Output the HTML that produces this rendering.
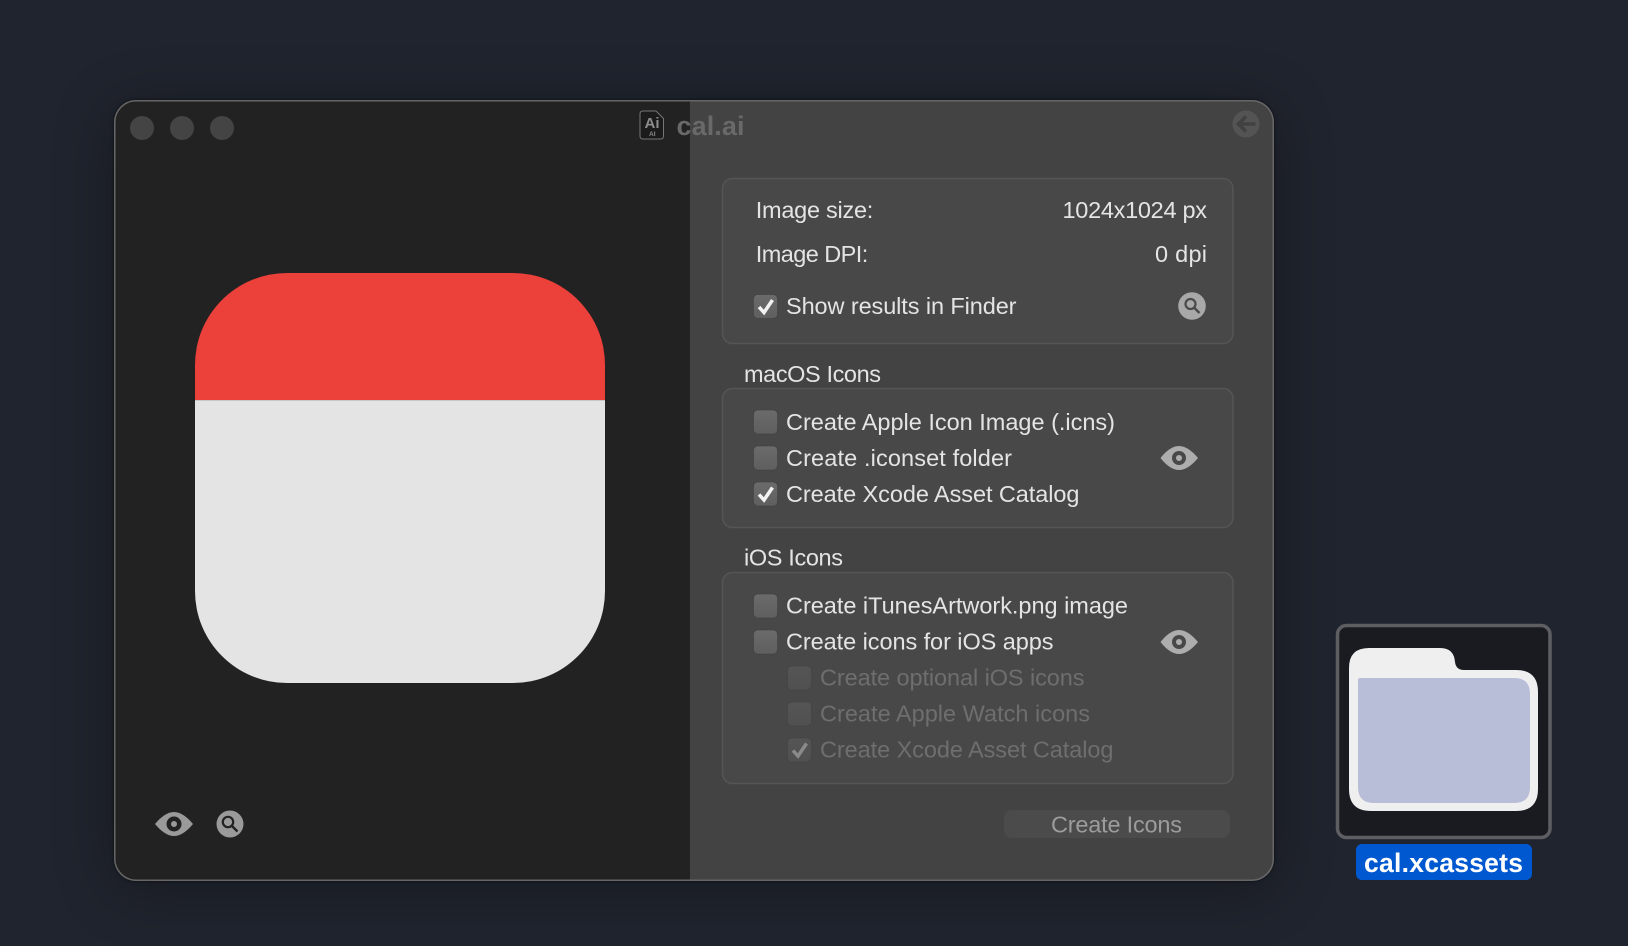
<!DOCTYPE html>
<html><head><meta charset="utf-8"><style>
html,body{margin:0;padding:0;background:#20242e;width:1628px;height:946px;overflow:hidden}
#w{position:absolute;left:114px;top:100px;width:1160px;height:781px;border-radius:22px;box-shadow:0 8px 60px rgba(0,0,0,.3),0 0 3px rgba(0,0,0,.6)}
svg{position:absolute;left:0;top:0}
text{font-family:"Liberation Sans",sans-serif;font-size:23.5px;fill:#e4e4e4}
.d{fill:#6e6e6e}
</style></head><body>
<div id="w"></div>
<svg width="1628" height="946" viewBox="0 0 1628 946" xmlns="http://www.w3.org/2000/svg">
<defs>
<clipPath id="wc"><rect x="114" y="100" width="1160" height="781" rx="22"/></clipPath>
<clipPath id="ic"><rect x="195" y="273" width="410" height="410" rx="92"/></clipPath>
<linearGradient id="cb" x1="0" y1="0" x2="0" y2="1"><stop offset="0" stop-color="#6b6b6b"/><stop offset="1" stop-color="#5f5f5f"/></linearGradient>
<linearGradient id="cd" x1="0" y1="0" x2="0" y2="1"><stop offset="0" stop-color="#555"/><stop offset="1" stop-color="#505050"/></linearGradient>
</defs>
<g clip-path="url(#wc)">
<rect x="114" y="100" width="576" height="781" fill="#222222"/>
<rect x="690" y="100" width="584" height="781" fill="#434343"/>
</g>
<rect x="114.750" y="100.750" width="1158.500" height="779.500" rx="21.500" fill="none" stroke="#666" stroke-width="1.500"/>
<circle cx="142" cy="128" r="12" fill="#444"/><circle cx="182" cy="128" r="12" fill="#444"/><circle cx="222" cy="128" r="12" fill="#444"/>
<path d="M643 111H656L663.500 118.500V136Q663.500 139 660.500 139H643Q640 139 640 136V114Q640 111 643 111Z" fill="#1b1b1b" stroke="#767676" stroke-width="1"/>
<text x="644.500" y="128" style="font-size:15px;font-weight:bold;fill:#8c8c8c">Ai</text>
<text x="649" y="136" style="font-size:6.500px;font-weight:bold;fill:#8c8c8c">AI</text>
<text x="676.500" y="135" textLength="68" lengthAdjust="spacing" style="font-size:27px;font-weight:bold;fill:#696969">cal.ai</text>
<circle cx="1246" cy="124" r="13.500" fill="#545454"/>
<path d="M1255.500 124H1239M1246 116.500L1238.500 124L1246 131.500" fill="none" stroke="#414141" stroke-width="3.600"/>

<g clip-path="url(#ic)"><rect x="195" y="273" width="410" height="127" fill="#ec403b"/><rect x="195" y="400" width="410" height="283" fill="#e4e4e4"/><rect x="195" y="400" width="410" height="1" fill="#c8c8c8"/></g>

<g fill="#484848" stroke="#555" stroke-width="1.500">
<rect x="722.500" y="178.500" width="510.500" height="165" rx="10"/>
<rect x="722.500" y="388.500" width="510.500" height="139" rx="10"/>
<rect x="722.500" y="572.500" width="510.500" height="211" rx="10"/>
</g>

<text x="755.800" y="218" textLength="117.500" lengthAdjust="spacing">Image size:</text>
<text x="1062.500" y="218" textLength="144.500" lengthAdjust="spacing">1024x1024 px</text>
<text x="755.800" y="262" textLength="112.500" lengthAdjust="spacing">Image DPI:</text>
<text x="1155" y="262" textLength="52" lengthAdjust="spacing">0 dpi</text>
<text x="786" y="314" textLength="230.500" lengthAdjust="spacing">Show results in Finder</text>
<text x="744" y="382" textLength="137" lengthAdjust="spacing">macOS Icons</text>
<text x="786" y="430" textLength="329" lengthAdjust="spacing">Create Apple Icon Image (.icns)</text>
<text x="786" y="466" textLength="226" lengthAdjust="spacing">Create .iconset folder</text>
<text x="786" y="502" textLength="293.500" lengthAdjust="spacing">Create Xcode Asset Catalog</text>
<text x="744" y="565.500" textLength="99" lengthAdjust="spacing">iOS Icons</text>
<text x="786" y="613.500" textLength="342" lengthAdjust="spacing">Create iTunesArtwork.png image</text>
<text x="786" y="649.500" textLength="267.500" lengthAdjust="spacing">Create icons for iOS apps</text>
<text class="d" x="820" y="685.500" textLength="264.500" lengthAdjust="spacing">Create optional iOS icons</text>
<text class="d" x="820" y="721.500" textLength="270" lengthAdjust="spacing">Create Apple Watch icons</text>
<text class="d" x="820" y="757.500" textLength="293.500" lengthAdjust="spacing">Create Xcode Asset Catalog</text>

<g fill="url(#cb)" stroke="#3c3c3c" stroke-width=".5">
<rect x="753.500" y="294.500" width="24" height="24" rx="4.500"/>
<rect x="753.500" y="410" width="24" height="24" rx="4.500"/>
<rect x="753.500" y="446" width="24" height="24" rx="4.500"/>
<rect x="753.500" y="482" width="24" height="24" rx="4.500"/>
<rect x="753.500" y="594" width="24" height="24" rx="4.500"/>
<rect x="753.500" y="630" width="24" height="24" rx="4.500"/>
</g>
<g fill="url(#cd)" stroke="#3e3e3e" stroke-width=".5">
<rect x="787.500" y="666" width="24" height="24" rx="4.500"/>
<rect x="787.500" y="702" width="24" height="24" rx="4.500"/>
<rect x="787.500" y="738" width="24" height="24" rx="4.500"/>
</g>
<g fill="none" stroke-width="3.500">
<path d="M759 307L764 312.500L772.500 300" stroke="#f2f2f2"/>
<path d="M759 494.500L764 500L772.500 487.500" stroke="#f2f2f2"/>
<path d="M793 750.500L798 756L806.500 743.500" stroke="#8a8a8a"/>
</g>

<path d="M1160.500 458Q1170 446 1179 446Q1188 446 1198 458Q1188 470 1179 470Q1170 470 1160.500 458Z" fill="#adadad"/>
<circle cx="1179" cy="458" r="7" fill="#484848"/><circle cx="1179" cy="458" r="3" fill="#adadad"/>
<path d="M1160.500 642Q1170 630 1179 630Q1188 630 1198 642Q1188 654 1179 654Q1170 654 1160.500 642Z" fill="#adadad"/>
<circle cx="1179" cy="642" r="7" fill="#484848"/><circle cx="1179" cy="642" r="3" fill="#adadad"/>
<circle cx="1192" cy="306" r="13.800" fill="#a8a8a8"/>
<circle cx="1190.500" cy="304" r="5" fill="none" stroke="#4a4a4a" stroke-width="2.200"/><path d="M1194 307.500L1199.500 313" stroke="#4a4a4a" stroke-width="2.400"/>

<path d="M155 824Q165 812 174 812Q183 812 193 824Q183 836 174 836Q165 836 155 824Z" fill="#9a9a9a"/>
<circle cx="174" cy="824" r="7.500" fill="#222"/><circle cx="174" cy="824" r="3" fill="#9a9a9a"/>
<circle cx="230" cy="824" r="13.500" fill="#9a9a9a"/>
<circle cx="228" cy="822" r="5.200" fill="none" stroke="#222" stroke-width="2.200"/><path d="M232 826L237.500 831.500" stroke="#222" stroke-width="2.400"/>

<rect x="1004" y="810" width="226" height="28" rx="8" fill="#4b4b4b"/>
<text x="1051" y="832.500" textLength="131" lengthAdjust="spacing" style="fill:#9c9c9c">Create Icons</text>

<rect x="1337.500" y="625.500" width="212.500" height="212" rx="9" fill="#1a1b20" stroke="#5e5e62" stroke-width="3.500"/>
<path d="M1349 668Q1349 648 1369 648H1440Q1454 648 1455 662Q1456 670 1464 670H1516Q1538 670 1538 692V789Q1538 811 1516 811H1371Q1349 811 1349 789Z" fill="#efefef"/>
<path d="M1358 680Q1358 678 1360 678H1514Q1530 678 1530 694V787Q1530 803 1514 803H1374Q1358 803 1358 787Z" fill="#b8bdd8"/>
<rect x="1356" y="844" width="176" height="36" rx="6" fill="#0058d0"/>
<text x="1364" y="872" textLength="159" lengthAdjust="spacing" style="font-size:26.500px;font-weight:bold;fill:#fff">cal.xcassets</text>
</svg>
</body></html>
